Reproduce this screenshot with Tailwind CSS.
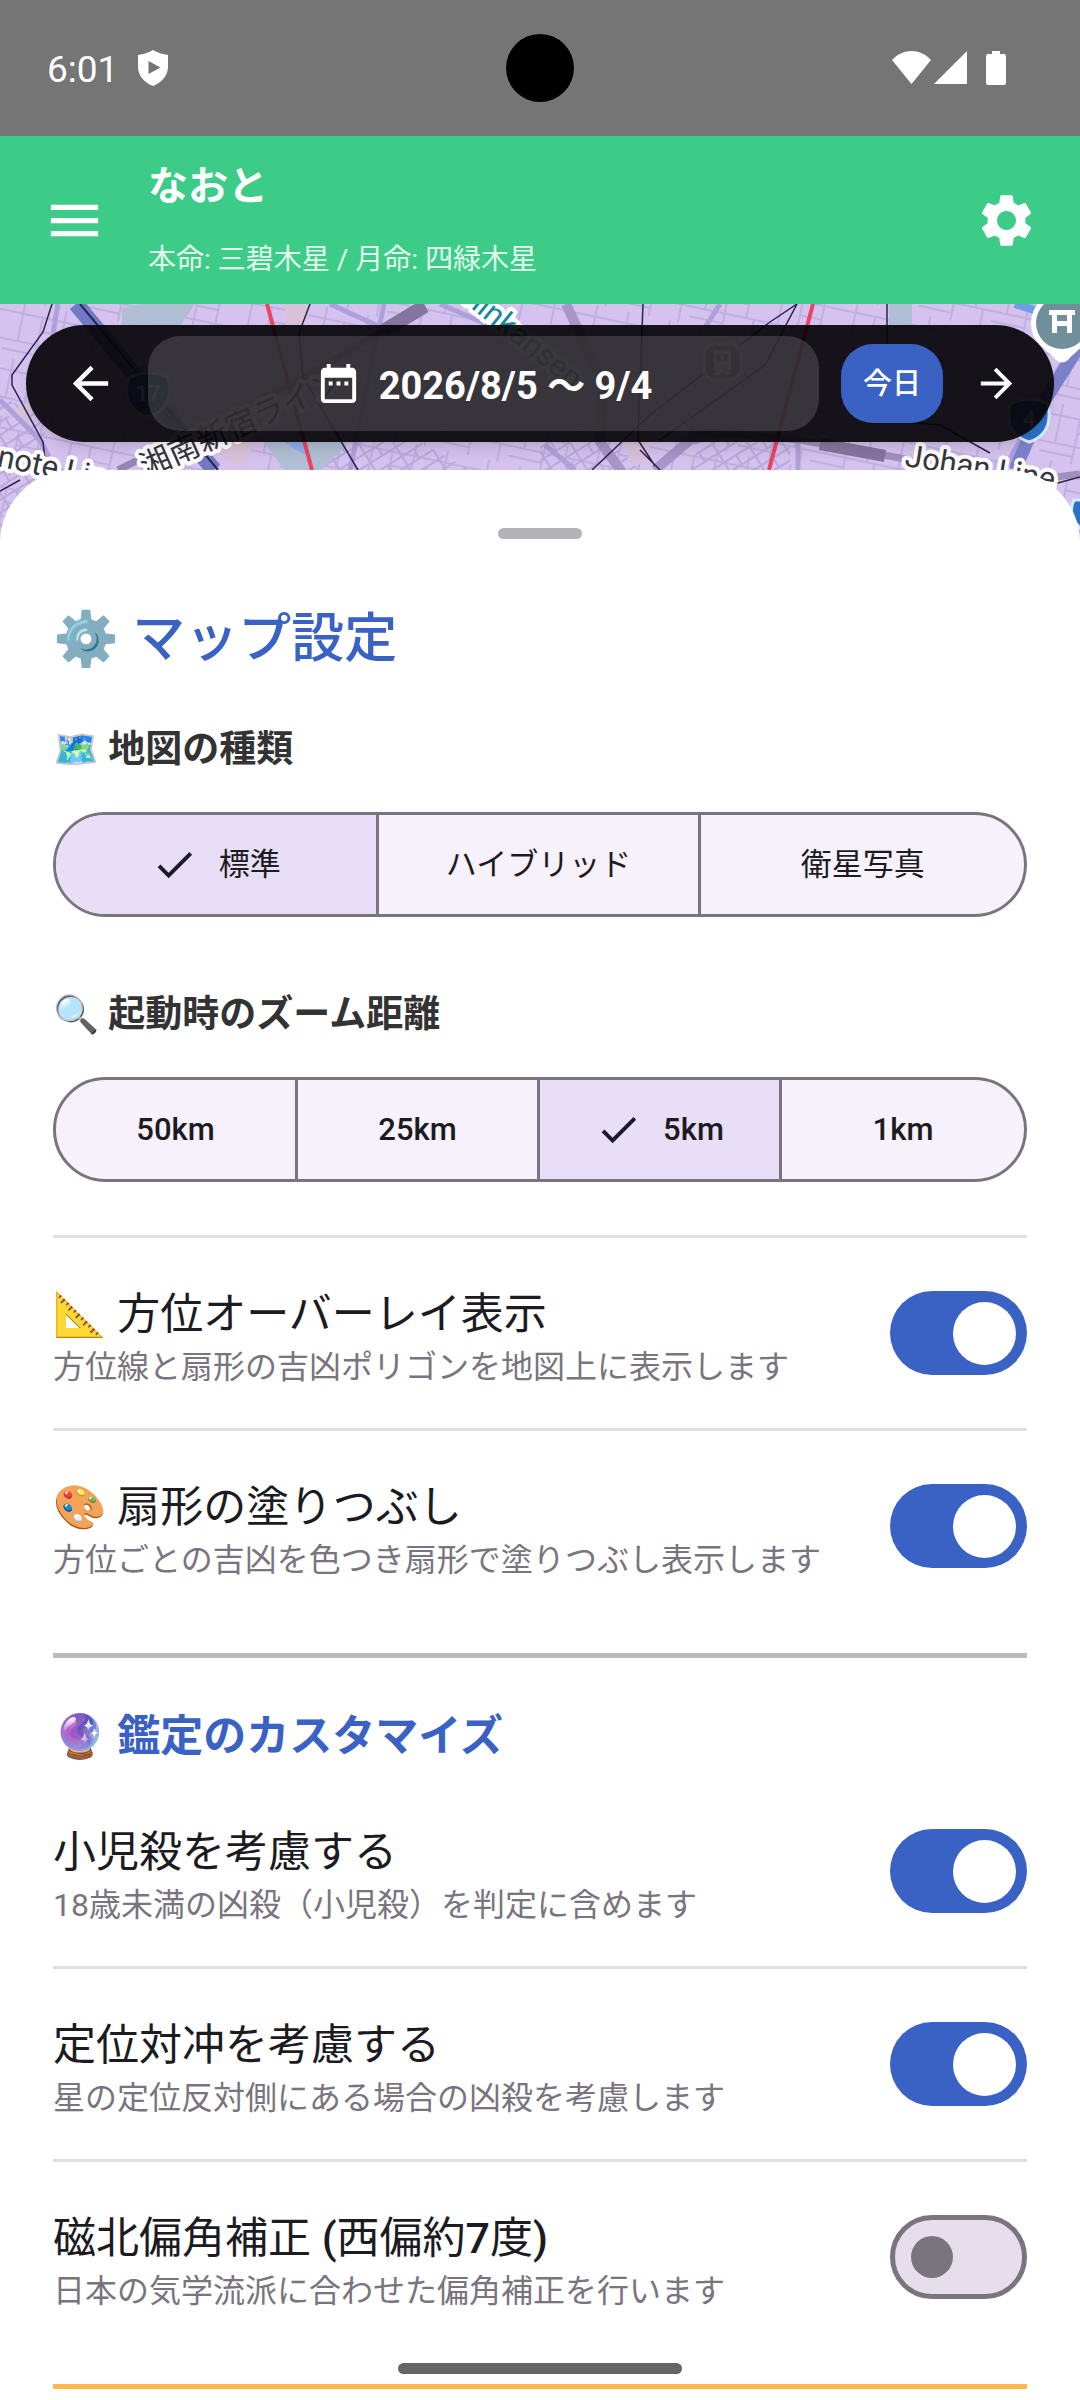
<!DOCTYPE html>
<html lang="ja">
<head>
    <meta charset="UTF-8">
    <meta name="viewport" content="width=device-width, initial-scale=1.0">
    <title>マップ設定</title>
    <script src="https://cdn.jsdelivr.net/npm/@tailwindcss/browser@4"></script>
</head>
<body class="min-h-screen flex flex-col bg-white font-[Roboto,'Noto_Sans_CJK_JP','Noto_Color_Emoji',sans-serif] text-[#1c1b1f]">
    <!-- Status bar -->
    <div class="relative h-[136px] bg-[#757575] text-white flex items-center justify-between pl-[47px] pr-[74px]">
        <div class="flex items-center gap-5">
            <span class="pt-1 text-[37px] leading-[48px]">6:01</span>
            <svg class="w-[30px] h-[36px]" viewBox="0 0 30 36" fill="currentColor" aria-hidden="true">
                <path fill-rule="evenodd" d="M15 0C11 2.500 5 4.500 0 5V17C0 26 7 33 15 36C23 33 30 26 30 17V5C25 4.500 19 2.500 15 0ZM10.500 11L22.500 17.500L10.500 24Z"/>
            </svg>
        </div>
        <div class="absolute left-1/2 top-1/2 size-[68px] -translate-x-1/2 -translate-y-1/2 rounded-full bg-black"></div>
        <div class="flex items-center">
            <svg class="w-[76px] h-[34px]" viewBox="0 0 76 34" fill="currentColor" aria-hidden="true">
                <path d="M0 9C11-3 28-3 39 9L19.500 33Z"/>
                <path d="M75 0V33H42Z"/>
            </svg>
            <svg class="ml-[18px] w-[20px] h-[34px]" viewBox="0 0 20 34" fill="currentColor" aria-hidden="true">
                <path d="M6 0H14V3H18Q20 3 20 5V32Q20 34 18 34H2Q0 34 0 32V5Q0 3 2 3H6Z"/>
            </svg>
        </div>
    </div>

    <!-- App bar -->
    <header class="h-[168px] bg-[#3dcb88] text-white flex items-center pl-[43px] pr-[42px]">
        <button type="button" aria-label="メニュー">
            <svg class="size-[63px]" viewBox="0 0 24 24" fill="currentColor"><path d="M3 18h18v-2H3v2zm0-5h18v-2H3v2zm0-7v2h18V6H3z"/></svg>
        </button>
        <div class="ml-[42px] flex-1">
            <h1 class="text-[40px] leading-[56px] font-bold">なおと</h1>
            <p class="mt-6 text-[28px] leading-[42px] text-white/85">本命: 三碧木星 / 月命: 四緑木星</p>
        </div>
        <button type="button" aria-label="設定">
            <svg class="size-[63px]" viewBox="0 0 24 24" fill="currentColor"><path d="M19.140 12.940c.04-.3.06-.61.06-.94 0-.32-.02-.64-.07-.94l2.030-1.580c.18-.14.23-.41.12-.61l-1.920-3.320c-.12-.22-.37-.29-.59-.22l-2.390.96c-.5-.38-1.030-.7-1.620-.94l-.36-2.540c-.04-.24-.24-.41-.48-.41h-3.840c-.24 0-.43.17-.47.41l-.36 2.540c-.59.24-1.130.57-1.620.94l-2.390-.96c-.22-.08-.47 0-.59.22L2.740 8.870c-.12.21-.08.47.12.61l2.030 1.580c-.05.3-.09.63-.09.94s.02.64.07.94l-2.030 1.580c-.18.14-.23.41-.12.61l1.920 3.320c.12.22.37.29.59.22l2.390-.96c.5.38 1.030.7 1.620.94l.36 2.540c.05.24.24.41.48.41h3.840c.24 0 .44-.17.47-.41l.36-2.540c.59-.24 1.130-.56 1.620-.94l2.390.96c.22.08.47 0 .59-.22l1.920-3.320c.12-.22.07-.47-.12-.61l-2.010-1.580zM12 15.600c-1.980 0-3.600-1.620-3.600-3.600s1.620-3.600 3.600-3.600 3.600 1.620 3.600 3.600-1.620 3.600-3.600 3.600z"/></svg>
        </button>
    </header>

    <!-- Map with date bar -->
    <section class="relative px-[26px] pt-[21px] pb-[28px]">
        <svg class="absolute inset-x-0 top-0 w-full h-[240px]" viewBox="0 304 1080 240" preserveAspectRatio="xMidYMin slice" aria-label="地図">
            <defs>
                <pattern id="blocks" width="74" height="58" patternUnits="userSpaceOnUse" patternTransform="rotate(12)">
                    <path d="M0 12H74M0 40H74M14 0V40M34 12V58M56 0V40M34 26H56M0 50H34M64 40V58" fill="none" stroke="#bfb0e0" stroke-width="2"/>
                </pattern>
                <pattern id="dense" width="30" height="22" patternUnits="userSpaceOnUse" patternTransform="rotate(-32)">
                    <path d="M0 6H30M0 17H30M9 0V22M23 6V17" fill="none" stroke="#b9a9dd" stroke-width="2"/>
                </pattern>
            </defs>
            <rect y="304" width="1080" height="240" fill="#d5c2ee"/>
            <rect y="304" width="1080" height="240" fill="url(#blocks)"/>
            <path d="M0 395L45 420V544H0ZM320 442H420L470 470H310ZM540 442H610L640 470H540ZM700 442H790V470H690Z" fill="url(#dense)"/>
            <path d="M122 308L140 304H195L180 326H122ZM262 440L352 440L318 472H286ZM889 304H912V326H889Z" fill="#b0bfd3"/>
            <path d="M285 442H305V455L296 450Z" fill="#8fb0ec"/>
            <path d="M285 304H312L305 326H285ZM205 442H255L240 470ZM625 442H650V466L630 462ZM5 415L30 400V425Z" fill="#d8c2d9"/>
            <g fill="none">
                <path d="M58 304L52 340M0 400L40 440L56 470M330 304L378 326M440 304L500 330M720 304L706 326M798 440V470M1080 330L1020 440L1004 470M545 445L575 470M384 304L350 470" stroke="#ada0dc" stroke-width="5"/>
                <path d="M566 304L602 380L600 442L622 472M655 470L690 440L740 428" stroke="#a995c9" stroke-width="10"/>
                <path d="M425 306L300 380L118 470" stroke="#9485b3" stroke-width="7"/>
                <path d="M425 306L385 330" stroke="#85749f" stroke-width="14"/>
                <path d="M690 430L800 440L900 458L1000 484L1080 474" stroke="#a08fbd" stroke-width="7"/>
                <path d="M820 444L885 456" stroke="#86769f" stroke-width="12"/>
                <path d="M76 304L214 470" stroke="#7179c4" stroke-width="16"/>
                <path d="M80 304L218 470" stroke="#28264f" stroke-width="2"/>
                <path d="M1080 345L1045 400L1015 470" stroke="#7b80c9" stroke-width="13"/>
                <path d="M1015 304L1040 312" stroke="#6f9ce4" stroke-width="8"/>
                <path d="M52 304L43 332L12 375V385L43 442L45 460M0 491L20 480M310 304L299 333L303 377L358 470M643 304L638 440L655 466M797 304L770 322L650 415L592 470M797 304L765 365L660 440M887 304V420L940 425L990 453M640 450L660 470M1054 484L1080 477" stroke="#2b2350" stroke-width="1.500"/>
                <path d="M267 304L312 470M813 304L769 470" stroke="#ec4360" stroke-width="4"/>
            </g>
            <g font-family="Roboto, 'Noto Sans CJK JP', sans-serif" font-size="31" stroke="#fff" stroke-width="8" stroke-linejoin="round" paint-order="stroke" fill="#37353d">
                <text transform="translate(572 390) rotate(39)" text-anchor="end" fill="#16879a">Shinkansen</text>
                <text transform="translate(146 478) rotate(-24)">湘南新宿ライン</text>
                <text transform="translate(-4 466) rotate(12)">note Line</text>
                <text transform="translate(904 466) rotate(9)">Johan Line</text>
            </g>
            <g stroke="#d8ecff" stroke-width="3" fill="#2c72c7">
                <path d="M128 378Q148 368 168 378Q176 408 148 417Q120 408 128 378Z"/>
                <path d="M1010 404Q1030 394 1048 404Q1054 434 1029 442Q1004 434 1010 404Z"/>
                <path d="M1074 500H1090V535L1082 530Q1066 515 1074 500Z"/>
            </g>
            <g font-family="Roboto, sans-serif" font-size="22" font-weight="500" fill="#fff" text-anchor="middle">
                <text x="148" y="401">17</text>
                <text x="1029" y="427">4</text>
            </g>
            <rect x="704" y="344" width="37" height="36" rx="12" fill="#8b8f98" stroke="#fff" stroke-width="3"/>
            <path fill-rule="evenodd" d="M714 353Q714 350 717 350H728Q731 350 731 353V368Q731 371 728 371L731 375H726L724 372H721L719 375H714L717 371Q714 371 714 368ZM717 354V361H721V354ZM724 354V361H728V354Z" fill="#fff"/>
            <path d="M1031 323A31 31 0 0 1 1093 323C1093 343 1078 348 1068 360Q1062 365 1056 360C1046 348 1031 343 1031 323Z" fill="#fff"/>
            <circle cx="1062" cy="323" r="26" fill="#708f9b"/>
            <path d="M1049 310H1075V315H1072V333H1067V326H1057V333H1052V315H1049ZM1057 315V321H1067V315Z" fill="#fff" fill-rule="evenodd"/>
        </svg>

        <div class="relative h-[117px] rounded-full bg-[#060409]/93 shadow-lg text-white flex items-center pl-[38px] pr-[34px]">
            <button type="button" aria-label="前へ">
                <svg class="size-[53px]" viewBox="0 0 24 24" fill="currentColor"><path d="M20 11H7.830l5.590-5.590L12 4l-8 8 8 8 1.410-1.410L7.830 13H20v-2z"/></svg>
            </button>
            <button type="button" class="ml-[31px] flex-1 h-[95px] rounded-[32px] bg-white/15 flex items-center justify-center gap-[17px]">
                <svg class="size-[47px]" viewBox="0 0 24 24" fill="currentColor" aria-hidden="true"><path d="M9 11H7v2h2v-2zm4 0h-2v2h2v-2zm4 0h-2v2h2v-2zm2-7h-1V2h-2v2H8V2H6v2H5c-1.110 0-1.990.9-1.990 2L3 20c0 1.100.89 2 2 2h14c1.100 0 2-.9 2-2V6c0-1.100-.9-2-2-2zm0 16H5V9h14v11z"/></svg>
                <span class="pt-1 text-[38px] leading-[48px] font-bold">2026/8/5 〜 9/4</span>
            </button>
            <button type="button" class="ml-[22px] w-[102px] h-[79px] rounded-[32px] bg-[#3a62c4] text-[29px] leading-[42px] font-medium">今日</button>
            <button type="button" class="ml-[30px]" aria-label="次へ">
                <svg class="size-[47px]" viewBox="0 0 24 24" fill="currentColor"><path d="M12 4l-1.410 1.410L16.170 11H4v2h12.170l-5.580 5.590L12 20l8-8z"/></svg>
            </button>
        </div>
    </section>

    <!-- Settings sheet -->
    <main class="relative z-10 flex-1 bg-white rounded-t-[73px] px-[53px] pt-[58px] pb-3">
        <div class="mx-auto w-[84px] h-[11px] rounded-full bg-[#b3b2b7]"></div>

        <h2 class="mt-[62px] text-[53px] leading-[76px] font-medium text-[#3a62c4]">⚙️ マップ設定</h2>

        <fieldset class="mt-[46px]">
            <legend class="mb-[35px] text-[37px] leading-[54px] font-bold text-[#333333]">🗺️ 地図の種類</legend>
            <div class="grid grid-cols-3 h-[105px] rounded-full border-3 border-[#79747e] bg-[#f6f1fa] divide-x-3 divide-[#79747e] overflow-hidden text-[31px] leading-[44px]">
                <label class="flex items-center justify-center gap-[21px] has-checked:bg-[#e8def7]">
                    <input type="radio" name="map-type" class="sr-only" checked>
                    <svg class="size-[47px]" viewBox="0 0 24 24" fill="#1d192b" aria-hidden="true"><path d="M9 16.170L4.830 12l-1.420 1.410L9 19 21 7l-1.410-1.410z"/></svg>
                    標準
                </label>
                <label class="flex items-center justify-center has-checked:bg-[#e8def7]">
                    <input type="radio" name="map-type" class="sr-only">
                    ハイブリッド
                </label>
                <label class="flex items-center justify-center has-checked:bg-[#e8def7]">
                    <input type="radio" name="map-type" class="sr-only">
                    衛星写真
                </label>
            </div>
        </fieldset>

        <fieldset class="mt-[71px]">
            <legend class="mb-[35px] text-[37px] leading-[54px] font-bold text-[#333333]">🔍 起動時のズーム距離</legend>
            <div class="grid grid-cols-4 h-[105px] rounded-full border-3 border-[#79747e] bg-[#f6f1fa] divide-x-3 divide-[#79747e] overflow-hidden text-[31px] leading-[44px] font-medium">
                <label class="flex items-center justify-center has-checked:bg-[#e8def7]">
                    <input type="radio" name="zoom" class="sr-only">
                    50km
                </label>
                <label class="flex items-center justify-center has-checked:bg-[#e8def7]">
                    <input type="radio" name="zoom" class="sr-only">
                    25km
                </label>
                <label class="flex items-center justify-center gap-[21px] has-checked:bg-[#e8def7]">
                    <input type="radio" name="zoom" class="sr-only" checked>
                    <svg class="size-[47px]" viewBox="0 0 24 24" fill="#1d192b" aria-hidden="true"><path d="M9 16.170L4.830 12l-1.420 1.410L9 19 21 7l-1.410-1.410z"/></svg>
                    5km
                </label>
                <label class="flex items-center justify-center has-checked:bg-[#e8def7]">
                    <input type="radio" name="zoom" class="sr-only">
                    1km
                </label>
            </div>
        </fieldset>

        <div class="mt-[53px]">
            <label class="flex items-center justify-between py-[42px] border-t-3 border-[#e0e0e0]">
                <span>
                    <span class="block text-[43px] leading-[68px]">📐 方位オーバーレイ表示</span>
                    <span class="block text-[32px] leading-[38px] text-[#79747e]">方位線と扇形の吉凶ポリゴンを地図上に表示します</span>
                </span>
                <input type="checkbox" role="switch" checked class="shrink-0 appearance-none w-[137px] h-[84px] rounded-full border-5 border-[#79747e] bg-[#e6deea] flex items-center px-4 before:size-[42px] before:rounded-full before:bg-[#79747e] checked:border-0 checked:bg-[#3a62c4] checked:justify-end checked:px-[11px] checked:before:size-[63px] checked:before:bg-white">
            </label>
            <label class="flex items-center justify-between py-[42px] border-t-3 border-[#e0e0e0]">
                <span>
                    <span class="block text-[43px] leading-[68px]">🎨 扇形の塗りつぶし</span>
                    <span class="block text-[32px] leading-[38px] text-[#79747e]">方位ごとの吉凶を色つき扇形で塗りつぶし表示します</span>
                </span>
                <input type="checkbox" role="switch" checked class="shrink-0 appearance-none w-[137px] h-[84px] rounded-full border-5 border-[#79747e] bg-[#e6deea] flex items-center px-4 before:size-[42px] before:rounded-full before:bg-[#79747e] checked:border-0 checked:bg-[#3a62c4] checked:justify-end checked:px-[11px] checked:before:size-[63px] checked:before:bg-white">
            </label>
        </div>

        <hr class="mt-8 border-t-5 border-[#bababa]">

        <h3 class="mt-[42px] mb-[4px] text-[43px] leading-[72px] font-bold text-[#3a62c4]">🔮 鑑定のカスタマイズ</h3>

        <div class="divide-y-3 divide-[#e0e0e0]">
            <label class="flex items-center justify-between py-[42px]">
                <span>
                    <span class="block text-[43px] leading-[68px]">小児殺を考慮する</span>
                    <span class="block text-[32px] leading-[38px] text-[#79747e]">18歳未満の凶殺（小児殺）を判定に含めます</span>
                </span>
                <input type="checkbox" role="switch" checked class="shrink-0 appearance-none w-[137px] h-[84px] rounded-full border-5 border-[#79747e] bg-[#e6deea] flex items-center px-4 before:size-[42px] before:rounded-full before:bg-[#79747e] checked:border-0 checked:bg-[#3a62c4] checked:justify-end checked:px-[11px] checked:before:size-[63px] checked:before:bg-white">
            </label>
            <label class="flex items-center justify-between py-[42px]">
                <span>
                    <span class="block text-[43px] leading-[68px]">定位対冲を考慮する</span>
                    <span class="block text-[32px] leading-[38px] text-[#79747e]">星の定位反対側にある場合の凶殺を考慮します</span>
                </span>
                <input type="checkbox" role="switch" checked class="shrink-0 appearance-none w-[137px] h-[84px] rounded-full border-5 border-[#79747e] bg-[#e6deea] flex items-center px-4 before:size-[42px] before:rounded-full before:bg-[#79747e] checked:border-0 checked:bg-[#3a62c4] checked:justify-end checked:px-[11px] checked:before:size-[63px] checked:before:bg-white">
            </label>
            <label class="flex items-center justify-between py-[42px]">
                <span>
                    <span class="block text-[43px] leading-[68px]">磁北偏角補正 <span class="font-medium">(</span>西偏約<span class="font-medium">7</span>度<span class="font-medium">)</span></span>
                    <span class="block text-[32px] leading-[38px] text-[#79747e]">日本の気学流派に合わせた偏角補正を行います</span>
                </span>
                <input type="checkbox" role="switch" class="shrink-0 appearance-none w-[137px] h-[84px] rounded-full border-5 border-[#79747e] bg-[#e6deea] flex items-center px-4 before:size-[42px] before:rounded-full before:bg-[#79747e] checked:border-0 checked:bg-[#3a62c4] checked:justify-end checked:px-[11px] checked:before:size-[63px] checked:before:bg-white">
            </label>
        </div>

        <hr class="mt-8 border-t-5 border-[#ffb74d]">
    </main>

    <!-- Gesture handle -->
    <div class="fixed z-20 bottom-[26px] left-1/2 -translate-x-1/2 w-[284px] h-[11px] rounded-full bg-[#666666]"></div>
</body>
</html>
